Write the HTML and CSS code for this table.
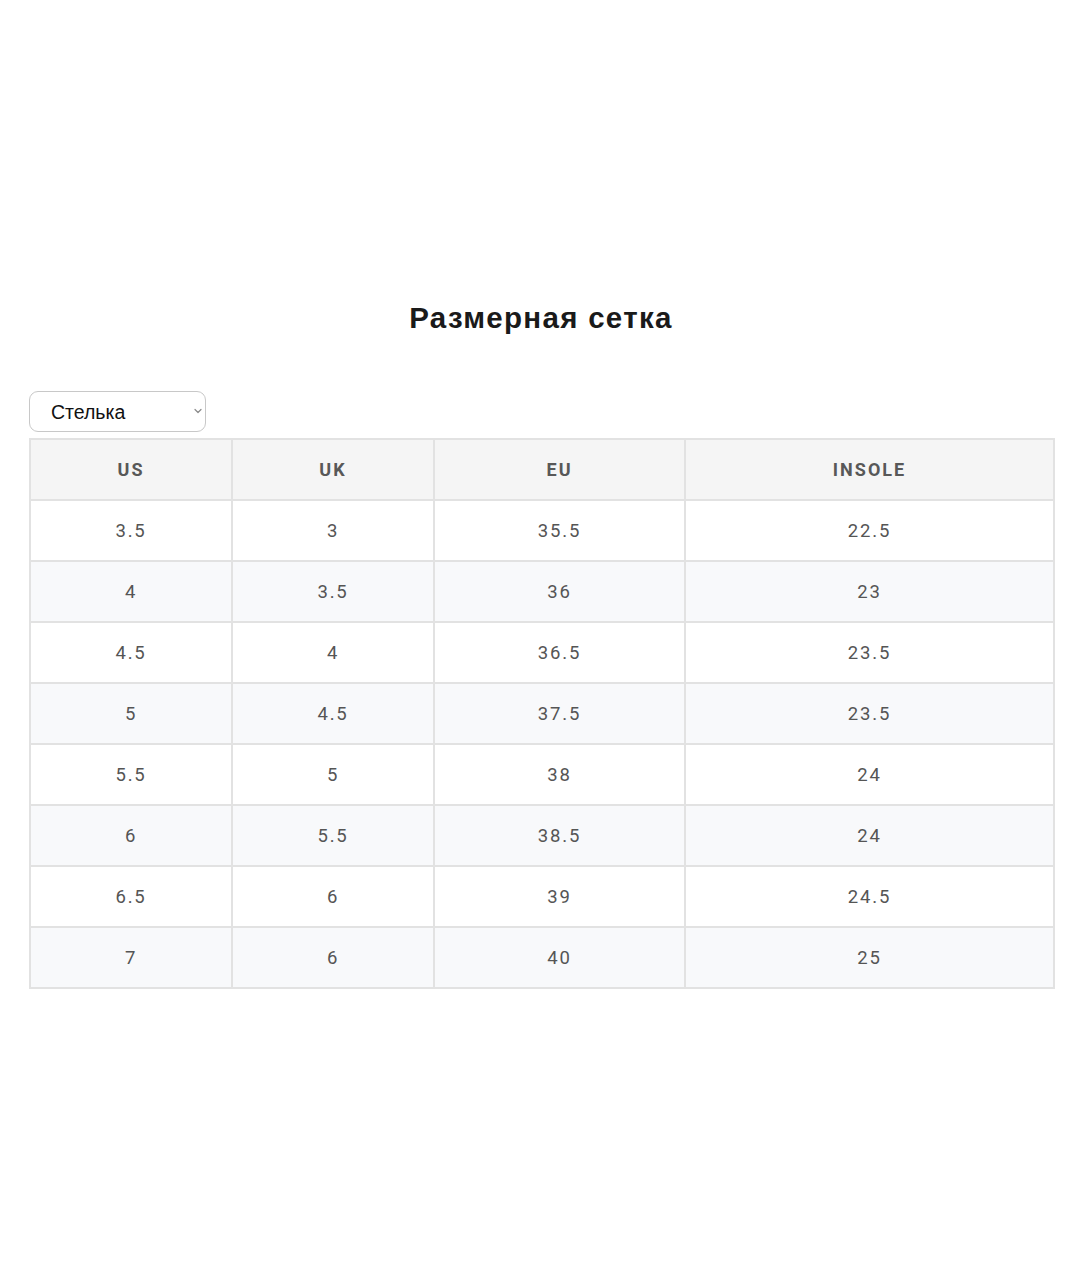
FILE: index.html
```html
<!DOCTYPE html>
<html lang="ru">
<head>
<meta charset="utf-8">
<title>Размерная сетка</title>
<link rel="stylesheet" href="styles.css">
</head>
<body>
<main class="page">
  <h1 class="title">Размерная сетка</h1>
  <div class="controls">
    <div class="select-wrap">
      <select class="unit-select">
        <option>Стелька</option>
      </select>
      <svg class="chevron" width="8" height="6" viewBox="0 0 8 6" aria-hidden="true">
        <path d="M1 1.5 L4 4.5 L7 1.5" fill="none" stroke="#8a8a8a" stroke-width="1.2" stroke-linecap="round" stroke-linejoin="round"/>
      </svg>
    </div>
  </div>
  <table class="size-table">
    <colgroup>
      <col class="c-us"><col class="c-uk"><col class="c-eu"><col class="c-insole">
    </colgroup>
    <thead>
      <tr><th>US</th><th>UK</th><th>EU</th><th>INSOLE</th></tr>
    </thead>
    <tbody>
      <tr><td>3.5</td><td>3</td><td>35.5</td><td>22.5</td></tr>
      <tr><td>4</td><td>3.5</td><td>36</td><td>23</td></tr>
      <tr><td>4.5</td><td>4</td><td>36.5</td><td>23.5</td></tr>
      <tr><td>5</td><td>4.5</td><td>37.5</td><td>23.5</td></tr>
      <tr><td>5.5</td><td>5</td><td>38</td><td>24</td></tr>
      <tr><td>6</td><td>5.5</td><td>38.5</td><td>24</td></tr>
      <tr><td>6.5</td><td>6</td><td>39</td><td>24.5</td></tr>
      <tr><td>7</td><td>6</td><td>40</td><td>25</td></tr>
    </tbody>
  </table>
</main>
</body>
</html>
```
FILE: styles.css
```css
html, body {
  margin: 0;
  padding: 0;
  background: #ffffff;
}
.page {
  padding: 296px 0 0 29px;
  font-family: Roboto, "Liberation Sans", sans-serif;
}
.title {
  margin: 0;
  width: 1024px;
  text-align: center;
  font-family: "Liberation Sans", Arial, sans-serif;
  font-weight: 700;
  font-size: 29.5px;
  line-height: 44px;
  letter-spacing: 1.3px;
  color: #1a1a1a;
}
.controls {
  margin-top: 51px;
  margin-bottom: 6px;
}
.select-wrap {
  position: relative;
  width: 177px;
}
.unit-select {
  width: 177px;
  height: 41px;
  padding: 0 8px 0 21px;
  font-family: "Liberation Sans", Arial, sans-serif;
  font-size: 19.5px;
  color: #111;
  background: #fff;
  border: 1.5px solid #c8c8c8;
  border-radius: 9px;
  display: block;
  appearance: none;
  -webkit-appearance: none;
}
.chevron {
  position: absolute;
  right: 4px;
  top: 17px;
  pointer-events: none;
}
.size-table {
  width: 1024px;
  border-collapse: collapse;
  table-layout: fixed;
  border: 2px solid #e2e2e2;
}
.c-us { width: 202px; }
.c-uk { width: 202px; }
.c-eu { width: 251px; }
.c-insole { width: 369px; }
.size-table th,
.size-table td {
  border: 2px solid #e2e2e2;
  height: 59px;
  padding: 0;
  text-align: center;
  vertical-align: middle;
  color: #555;
}
.size-table th {
  background: #f5f5f5;
  font-size: 18px;
  font-weight: 700;
  letter-spacing: 2px;
  color: #585858;
}
.size-table td {
  font-size: 18.5px;
  font-weight: 400;
  letter-spacing: 1.8px;
}
.size-table tbody tr:nth-child(even) td {
  background: #f8f9fb;
}
```
